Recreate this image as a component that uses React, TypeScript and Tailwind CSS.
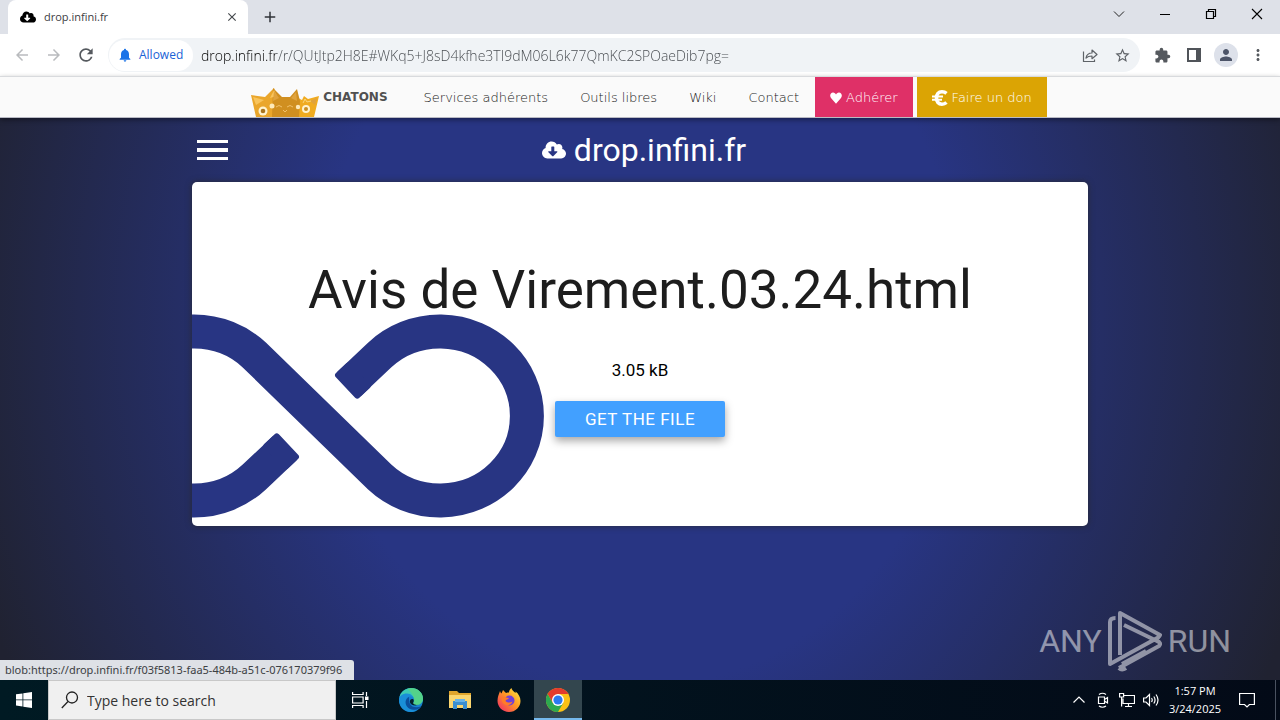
import { useState } from 'react';
import type { ReactNode } from 'react';
import { FaCloudDownloadAlt } from 'react-icons/fa';
import { MdArrowBack, MdArrowForward, MdRefresh, MdNotifications, MdStarBorder, MdExtension, MdPerson, MdMoreVert, MdClose, MdAdd } from 'react-icons/md';

const UI_FONT = "font-['Open_Sans','Noto_Sans',sans-serif]";

const NAV_LINKS = [
  { label: 'Services adhérents', href: '#services' },
  { label: 'Outils libres', href: '#outils' },
  { label: 'Wiki', href: '#wiki' },
  { label: 'Contact', href: '#contact' },
];

interface IconButtonProps {
  label: string;
  className?: string;
  children?: ReactNode;
}

function IconButton({ label, className = '', children }: IconButtonProps) {
  return (
    <button type="button" aria-label={label} className={`flex shrink-0 items-center justify-center ${className}`}>
      {children}
    </button>
  );
}

function TabStrip() {
  return (
    <div className="flex h-[34px] items-stretch bg-[#dee1e8]">
      <div className="ml-2 flex w-60 items-center rounded-t-lg bg-white pl-3 pr-2">
        <FaCloudDownloadAlt className="size-4 text-black" />
        <span className="ml-2 flex-1 text-[11px] text-[#3c4043]">drop.infini.fr</span>
        <IconButton label="Close tab" className="size-4 text-[#45494d]">
          <MdClose className="size-3.5" />
        </IconButton>
      </div>
      <IconButton label="New tab" className="ml-3 w-5 text-[#303338]">
        <MdAdd className="size-[18px]" />
      </IconButton>
      <div className="ml-auto flex items-center pb-1.5">
        <IconButton label="Search tabs" className="w-[46px]">
          <svg viewBox="0 0 12 12" className="size-3" fill="none" stroke="#222"><path d="M1 3.5l5 5 5-5" /></svg>
        </IconButton>
        <IconButton label="Minimize" className="w-[46px]">
          <svg viewBox="0 0 12 12" className="size-3" fill="none" stroke="#000"><path d="M1 6.5h10" /></svg>
        </IconButton>
        <IconButton label="Restore" className="w-[46px]">
          <svg viewBox="0 0 12 12" className="size-3" fill="none" stroke="#000" strokeWidth="1.2"><path d="M1.5 3.5h7v7h-7zM3.5 3.5v-2h7v7h-2" /></svg>
        </IconButton>
        <IconButton label="Close" className="w-[46px]">
          <svg viewBox="0 0 12 12" className="size-3" fill="none" stroke="#000" strokeWidth="1.1"><path d="M1 1l10 10M11 1L1 11" /></svg>
        </IconButton>
      </div>
    </div>
  );
}

function Toolbar() {
  const [url, setUrl] = useState('drop.infini.fr/r/QUtJtp2H8E#WKq5+J8sD4kfhe3TI9dM06L6k77QmKC2SPOaeDib7pg=');

  return (
    <div className="flex h-[42px] items-center bg-white px-2.5">
      <IconButton label="Back" className="mr-2 size-6 text-[#b9bbbe]"><MdArrowBack className="size-[18px]" /></IconButton>
      <IconButton label="Forward" className="mr-2 size-6 text-[#b9bbbe]"><MdArrowForward className="size-[18px]" /></IconButton>
      <IconButton label="Reload" className="mr-2.5 size-6 text-[#55595e]"><MdRefresh className="size-5" /></IconButton>
      <div className="flex h-[34px] flex-1 items-center rounded-full bg-[#f0f3f6]">
        <button type="button" className="ml-px flex h-[31px] w-[84px] items-center gap-1.5 rounded-full bg-white pl-2 text-[12px] text-[#1a62d6]">
          <MdNotifications className="size-4 text-[#1a73e8]" />
          Allowed
        </button>
        <input
          aria-label="Address"
          value={url}
          onChange={e => setUrl(e.target.value)}
          className="ml-2 min-w-0 flex-1 bg-[linear-gradient(90deg,#000_74px,#44484d_74px)] bg-clip-text text-[14px] font-light text-transparent outline-none"
        />
        <IconButton label="Share" className="mr-2 size-6">
          <svg viewBox="0 0 16 16" className="size-4" fill="none" stroke="#5f6368" strokeWidth="1.2">
            <path d="M1.5 4.5v10h11v-2" />
            <path d="M4 11c.6-3.5 2.600-5 6-5V3l5 4.500-5 4.200V9C7.500 9 5.500 9.500 4 11z" strokeLinejoin="round" />
          </svg>
        </IconButton>
        <IconButton label="Bookmark" className="mr-1.5 size-6 text-[#5f6368]"><MdStarBorder className="size-[17px]" /></IconButton>
      </div>
      <div className="ml-2.5 flex items-center gap-2">
        <IconButton label="Extensions" className="size-6 text-[#55595e]"><MdExtension className="size-[17px]" /></IconButton>
        <IconButton label="Side panel" className="size-6">
          <svg viewBox="0 0 14 14" className="size-3.5"><path d="M0 0h14v14H0zM2 2v10h7V2z" fill="#505459" fillRule="evenodd" /></svg>
        </IconButton>
        <IconButton label="Profile" className="size-6 rounded-full bg-[#dde1ea] text-[#4c5468]"><MdPerson className="size-[18px]" /></IconButton>
        <IconButton label="Menu" className="size-6 text-[#55595e]"><MdMoreVert className="size-[18px]" /></IconButton>
      </div>
    </div>
  );
}

function Crown() {
  return (
    <svg viewBox="0 0 68 30" className="h-[30px] w-[68px]">
      <path d="M0 8l14 2 9-9 4 10v19H5z" fill="#eaa62b" />
      <path d="M68 9l-11 3-4-3-2 4-8-4v21h20z" fill="#f0ab20" />
      <path d="M22 1l9 9h8l7-8 3 12-1 16H21z" fill="#d08f20" />
      <path d="M2 10l11 3-8 5zM23 3l3 6-7 2z" fill="#f8c45c" />
      <path d="M23 4l5 7-6 3zM45 5l-5 6 6 3zM66 11l-7 3 5 4z" fill="#e0a23c" />
      <circle cx="12" cy="24" r="4.500" fill="#fff3cf" />
      <circle cx="12" cy="24" r="2.300" fill="#a8741f" />
      <circle cx="21" cy="19" r="2.500" fill="#fde9ba" />
      <circle cx="55" cy="22" r="4" fill="#fff3cf" />
      <circle cx="55" cy="22" r="2" fill="#c98f22" />
      <circle cx="47" cy="20" r="2.200" fill="#fde9ba" />
      <path d="M25 20q3-3 6 0M36 20q3-3 6 0M32 23l2 2 2-2" fill="none" stroke="#f0c06a" />
      <path d="M52 16l2-4 2 3 4-1" fill="none" stroke="#f9d67d" />
    </svg>
  );
}

function SiteNav() {
  return (
    <nav className="relative z-10 flex h-[42px] items-stretch justify-center border-y border-t-[#d8dadd] border-b-[#b9bac4] bg-[#fafafa] pl-[18px] font-['DejaVu_Sans',sans-serif] text-[13px] font-extralight text-[#202020] shadow-[0_2px_5px_rgba(0,0,0,0.4)]">
      <a href="#chatons" className="mr-5 flex items-center gap-1 text-[12px] font-bold text-[#505050]">
        <span className="self-end"><Crown /></span>
        CHATONS
      </a>
      {NAV_LINKS.map(l => (
        <a key={l.label} href={l.href} className="flex items-center px-4 pt-0.5">{l.label}</a>
      ))}
      <a href="#adherer" className="flex items-center gap-1 bg-[#df3067] px-[15px] pt-0.5 text-white">
        <svg viewBox="0 0 12 12" className="size-3" fill="#fff"><path d="M6 11.800L1 6C-.8 3.500.6.5 3 .5c1.500 0 2.500 1 3 2 .5-1 1.500-2 3-2 2.400 0 3.800 3 2 5.500z" /></svg>
        Adhérer
      </a>
      <a href="#don" className="ml-1 flex items-center gap-1 bg-[#dba404] px-[15px] pt-0.5 text-white">
        <svg viewBox="0 0 16 16" className="size-4" fill="none" stroke="#fff">
          <path d="M14.500 3.300C13 2 11.600 1.800 10 1.800 6.500 1.800 4.500 4.300 4.500 8s2 6.200 5.500 6.200c1.600 0 3-.4 4.500-1.700" strokeWidth="3.600" />
          <path d="M0 6.500h11M0 9.700h10" strokeWidth="2" />
        </svg>
        Faire un don
      </a>
    </nav>
  );
}

function InfinityLogo() {
  return (
    <svg viewBox="192 314 352 204" className="absolute bottom-2 left-0 h-[204px] w-[352px]" fill="#283583">
      <path
        d="M349 384L379.700 355A87 84.500 0 1 1 379.700 477L254.300 355A87 84.500 0 1 0 254.300 477L285 448"
        fill="none"
        stroke="#283583"
        strokeWidth="34"
      />
      <rect x="0" y="-17" width="20" height="34" rx="3" transform="translate(345.500 387.500) rotate(-43.500)" />
      <rect x="0" y="-17" width="20" height="34" rx="3" transform="translate(288.500 444.500) rotate(136.500)" />
    </svg>
  );
}

function DownloadPage() {
  return (
    <main className="relative flex-1 bg-[radial-gradient(700px_800px_at_50%_200px,#283583_46%,#202231_100%)] font-['Roboto',sans-serif]">
      <div className="mx-auto w-[70%]">
        <header className="relative flex h-16 items-center justify-center">
          <button type="button" aria-label="Open menu" className="absolute left-[5px] flex w-[31px] flex-col gap-[5px]">
            <span className="h-[3px] bg-white" />
            <span className="h-1 bg-white" />
            <span className="h-[3px] bg-white" />
          </button>
          <h2 className="flex items-center gap-2 pl-2 text-[32px] leading-none text-white">
            <FaCloudDownloadAlt className="size-6" />
            drop.infini.fr
          </h2>
        </header>
        <section className="relative flex flex-col items-center rounded-[5px] bg-white pt-[76px] pb-[89px] text-[#1d1d1d] shadow-[0_0_6px_rgba(40,40,40,0.8)]">
          <InfinityLogo />
          <h1 className="relative text-[53px] leading-[64px]">Avis de Virement.03.24.html</h1>
          <p className="relative mt-9 text-[17px] leading-6 text-black">3.05 kB</p>
          <button type="button" className="relative mt-[19px] h-9 rounded-[2px] bg-[#42a0ff] px-[30px] pt-0.5 text-[17px] tracking-[0.5px] text-white shadow-[0_4px_8px_rgba(0,0,0,0.35)]">
            GET THE FILE
          </button>
        </section>
      </div>
      <div className="absolute bottom-0 left-0 flex h-5 items-center rounded-tr-[3px] bg-[#dee1e6] pr-3 pl-[5px] font-['Noto_Sans',sans-serif] text-[11px] text-[#3c4043]">
        blob:https://drop.infini.fr/f03f5813-faa5-484b-a51c-076170379f96
      </div>
      <div className="absolute right-[49px] bottom-2 flex items-center gap-1.5 text-[32px] leading-none text-white/50">
        ANY
        <svg viewBox="0 0 54 62" className="h-[62px] w-[54px]" fill="none" stroke="currentColor" strokeWidth="4" strokeLinejoin="round">
          <path d="M7.500 8C4 8 2 9 2 12v42l49-27M11 58l40-22c2-2 1-4-2-5L16 15M12 45V3l40 22c-1 2-2 3-4 2M11 58c2 2 4 2 7 0M14 54l24-13" />
        </svg>
        RUN
      </div>
    </main>
  );
}

function EdgeIcon() {
  return (
    <svg viewBox="0 0 24 24" className="size-6">
      <circle cx="12" cy="12" r="12" fill="#1681ce" />
      <path d="M.5 9C2 3.500 6.500 0 12 0c7 0 12 5 12 10.500 0 4-3 6.500-6.500 6.500-2.500 0-4-1.200-3-2.500 2-2.500.5-7-5-7C5 7.500 1.500 9 .5 9z" fill="#3ccbb4" />
      <path d="M12 0c7 0 12 5 12 10.500 0 4-3 6.500-6.500 6.500-2.500 0-4-1.200-3-2.500C16 12 14 4 8 1z" fill="#5bd47c" opacity=".75" />
      <path d="M0 12c0-4 3.500-6.500 8-6.500 4 0 7 3 7 6-.5-2-2-3-4-3-4 0-5.500 5-3 9 2 3.500 6 5.500 10 4.500C16 23.500 14 24 12 24 5 24 0 18.500 0 12z" fill="#1a8fd8" />
      <path d="M10 9c-3.500 1.500-4.500 6-2 9.500 2.500 3.200 7.500 4.500 12 2 1-.6 1.800-1.400 2.300-2.200-5 2.200-9.800.7-11.300-2.300-1.200-2.500-1-5-1-7z" fill="#0b4f9c" />
      <path d="M14.500 11.500c.5 1.500 0 2.500-.5 3.500 1 2 4 2.300 6 1.600-3 1.500-8 1-9-2-.7-2.500 1.500-4.600 3.500-3.100z" fill="#04202c" />
    </svg>
  );
}

function ExplorerIcon() {
  return (
    <svg viewBox="0 0 22 20" className="h-5 w-[22px]">
      <path d="M0 1h8l2 2h12v15H0z" fill="#e0a52c" />
      <path d="M0 5h22v13H0z" fill="#fbd66f" />
      <path d="M4 11h14v8h-4v-4H8v4H4z" fill="#3c8fd0" />
      <path d="M6 9h10v3H6z" fill="#69b4e8" />
    </svg>
  );
}

function FirefoxIcon() {
  return (
    <svg viewBox="0 0 24 24" className="size-6">
      <defs>
        <linearGradient id="fox" x1="1" y1="0" x2="0" y2="1">
          <stop offset="0" stopColor="#fff14a" />
          <stop offset=".45" stopColor="#ff9a22" />
          <stop offset="1" stopColor="#f0206e" />
        </linearGradient>
      </defs>
      <path d="M3 3c.5 1.500 1 2 1.500 2.500L6 2l3 3c2-.6 3-.4 3-.4C12 3 13 1 14.500 0c0 2 2 3 4 5 .3-.6 0-1 0-1.500 3 2 5 6 5 9.500 0 6-5 11-11.500 11S.5 19 .5 12.800C.5 9 2 6 3 3z" fill="url(#fox)" />
      <circle cx="12.500" cy="12.500" r="5" fill="#7040d8" />
      <path d="M5 9c3-1 4 1 7 1-1 2-3 1-3.500 3 2 2 5 2 7 .5-1 4-7 5-9.500 1.500C4.500 13 4.500 11 5 9z" fill="#ff7c28" />
    </svg>
  );
}

function ChromeIcon() {
  return (
    <svg viewBox="0 0 24 24" className="size-6">
      <circle cx="12" cy="12" r="12" fill="#fbc116" />
      <path d="M22.400 6H12L6.800 15 1.600 6A12 12 0 0 1 22.400 6z" fill="#e33b2e" />
      <path d="M1.600 6A12 12 0 0 0 12 24l5.200-9H6.800z" fill="#2da94f" />
      <circle cx="12" cy="12" r="6" fill="#fff" />
      <circle cx="12" cy="12" r="4.600" fill="#2a7af0" />
    </svg>
  );
}

function Taskbar() {
  const [query, setQuery] = useState('');

  return (
    <footer className="flex h-10 items-stretch bg-linear-to-r from-[#001a23] to-[#030a17] text-white">
      <IconButton label="Start" className="w-12">
        <svg viewBox="0 0 16 16" className="size-4" fill="#fff"><path d="M0 2.300l6.500-.9v6.100H0zM7.300 1.300L16 0v7.500H7.300zM0 8.300h6.500v6.200L0 13.600zM7.300 8.300H16V16l-8.700-1.300z" /></svg>
      </IconButton>
      <label className="flex w-72 items-center border border-[#c8c8c8] bg-[#f0f0f0] pl-3">
        <svg viewBox="0 0 18 18" className="size-[18px]" fill="none" stroke="#222" strokeWidth="1.300"><circle cx="11" cy="6.500" r="5.500" /><path d="M7 10.500L.8 17" /></svg>
        <input
          aria-label="Search"
          value={query}
          onChange={e => setQuery(e.target.value)}
          placeholder="Type here to search"
          className="ml-2 min-w-0 flex-1 text-[14px] outline-none placeholder:text-[#333]"
        />
      </label>
      <IconButton label="Task view" className="w-12">
        <svg viewBox="0 0 17 16" className="h-4 w-[17px]" fill="none" stroke="#fff" strokeWidth="1.200">
          <path d="M.6 0v2.500h10.500V0M.6 5h10.500v6H.6zM.6 16v-2.500h10.500V16M14.500 0v4M14.500 9v7" />
          <path d="M13 4.500h3.500v3.500H13z" fill="#fff" stroke="none" />
        </svg>
      </IconButton>
      <IconButton label="Edge" className="ml-[3px] w-12"><EdgeIcon /></IconButton>
      <IconButton label="File Explorer" className="w-[49px]"><ExplorerIcon /></IconButton>
      <IconButton label="Firefox" className="mr-px w-[49px]"><FirefoxIcon /></IconButton>
      <IconButton label="Chrome" className="w-12 border-b-2 border-[#76b9ed] bg-[#33464e] pt-0.5"><ChromeIcon /></IconButton>
      <div className="ml-auto flex items-center">
        <IconButton label="Show hidden icons" className="w-6">
          <svg viewBox="0 0 12 12" className="size-3" fill="none" stroke="#fff" strokeWidth="1.200"><path d="M.5 8.500L6 3l5.500 5.500" /></svg>
        </IconButton>
        <IconButton label="Meet now" className="w-6">
          <svg viewBox="0 0 16 16" className="size-4" fill="none" stroke="#fff" strokeWidth="1.200">
            <path d="M3.500 5h6v6.500h-6zM9.500 7.500l3-2v5.500l-3-2M4 2.500q3.500-2.500 7 0M4 14q3.500 2.500 7 0" />
          </svg>
        </IconButton>
        <IconButton label="Network" className="w-6">
          <svg viewBox="0 0 16 16" className="size-4" fill="none" stroke="#fff" strokeWidth="1.200">
            <path d="M5 3.500h10.500v8H4v-5M9.500 11.500v3M6 14.500h7M.6 1.500h4v3.500h-4zM2.600 5v9.500" />
          </svg>
        </IconButton>
        <IconButton label="Volume" className="w-6">
          <svg viewBox="0 0 16 16" className="size-4" fill="none" stroke="#fff" strokeWidth="1.200">
            <path d="M.6 6h2.400l3.500-3.500v11L3 10H.6zM8.500 6q1.500 2 0 4M10.800 4.500q2.500 3.500 0 7M13 2.500q4 5.500 0 11" />
          </svg>
        </IconButton>
        <time className="w-16 text-center text-[11px] leading-[18px]">1:57 PM<br />3/24/2025</time>
        <IconButton label="Notifications" className="mr-2 w-10">
          <svg viewBox="0 0 16 16" className="size-4" fill="none" stroke="#fff" strokeWidth="1.200"><path d="M.6 1.500h14.800v11h-5L8 15l-2.500-2.500H.6z" /></svg>
        </IconButton>
        <IconButton label="Show desktop" className="h-10 w-[5px] border-l border-[#4a5260]" />
      </div>
    </footer>
  );
}

export default function App() {
  return (
    <div className={`flex min-h-screen flex-col ${UI_FONT}`}>
      <TabStrip />
      <Toolbar />
      <SiteNav />
      <DownloadPage />
      <Taskbar />
    </div>
  );
}
